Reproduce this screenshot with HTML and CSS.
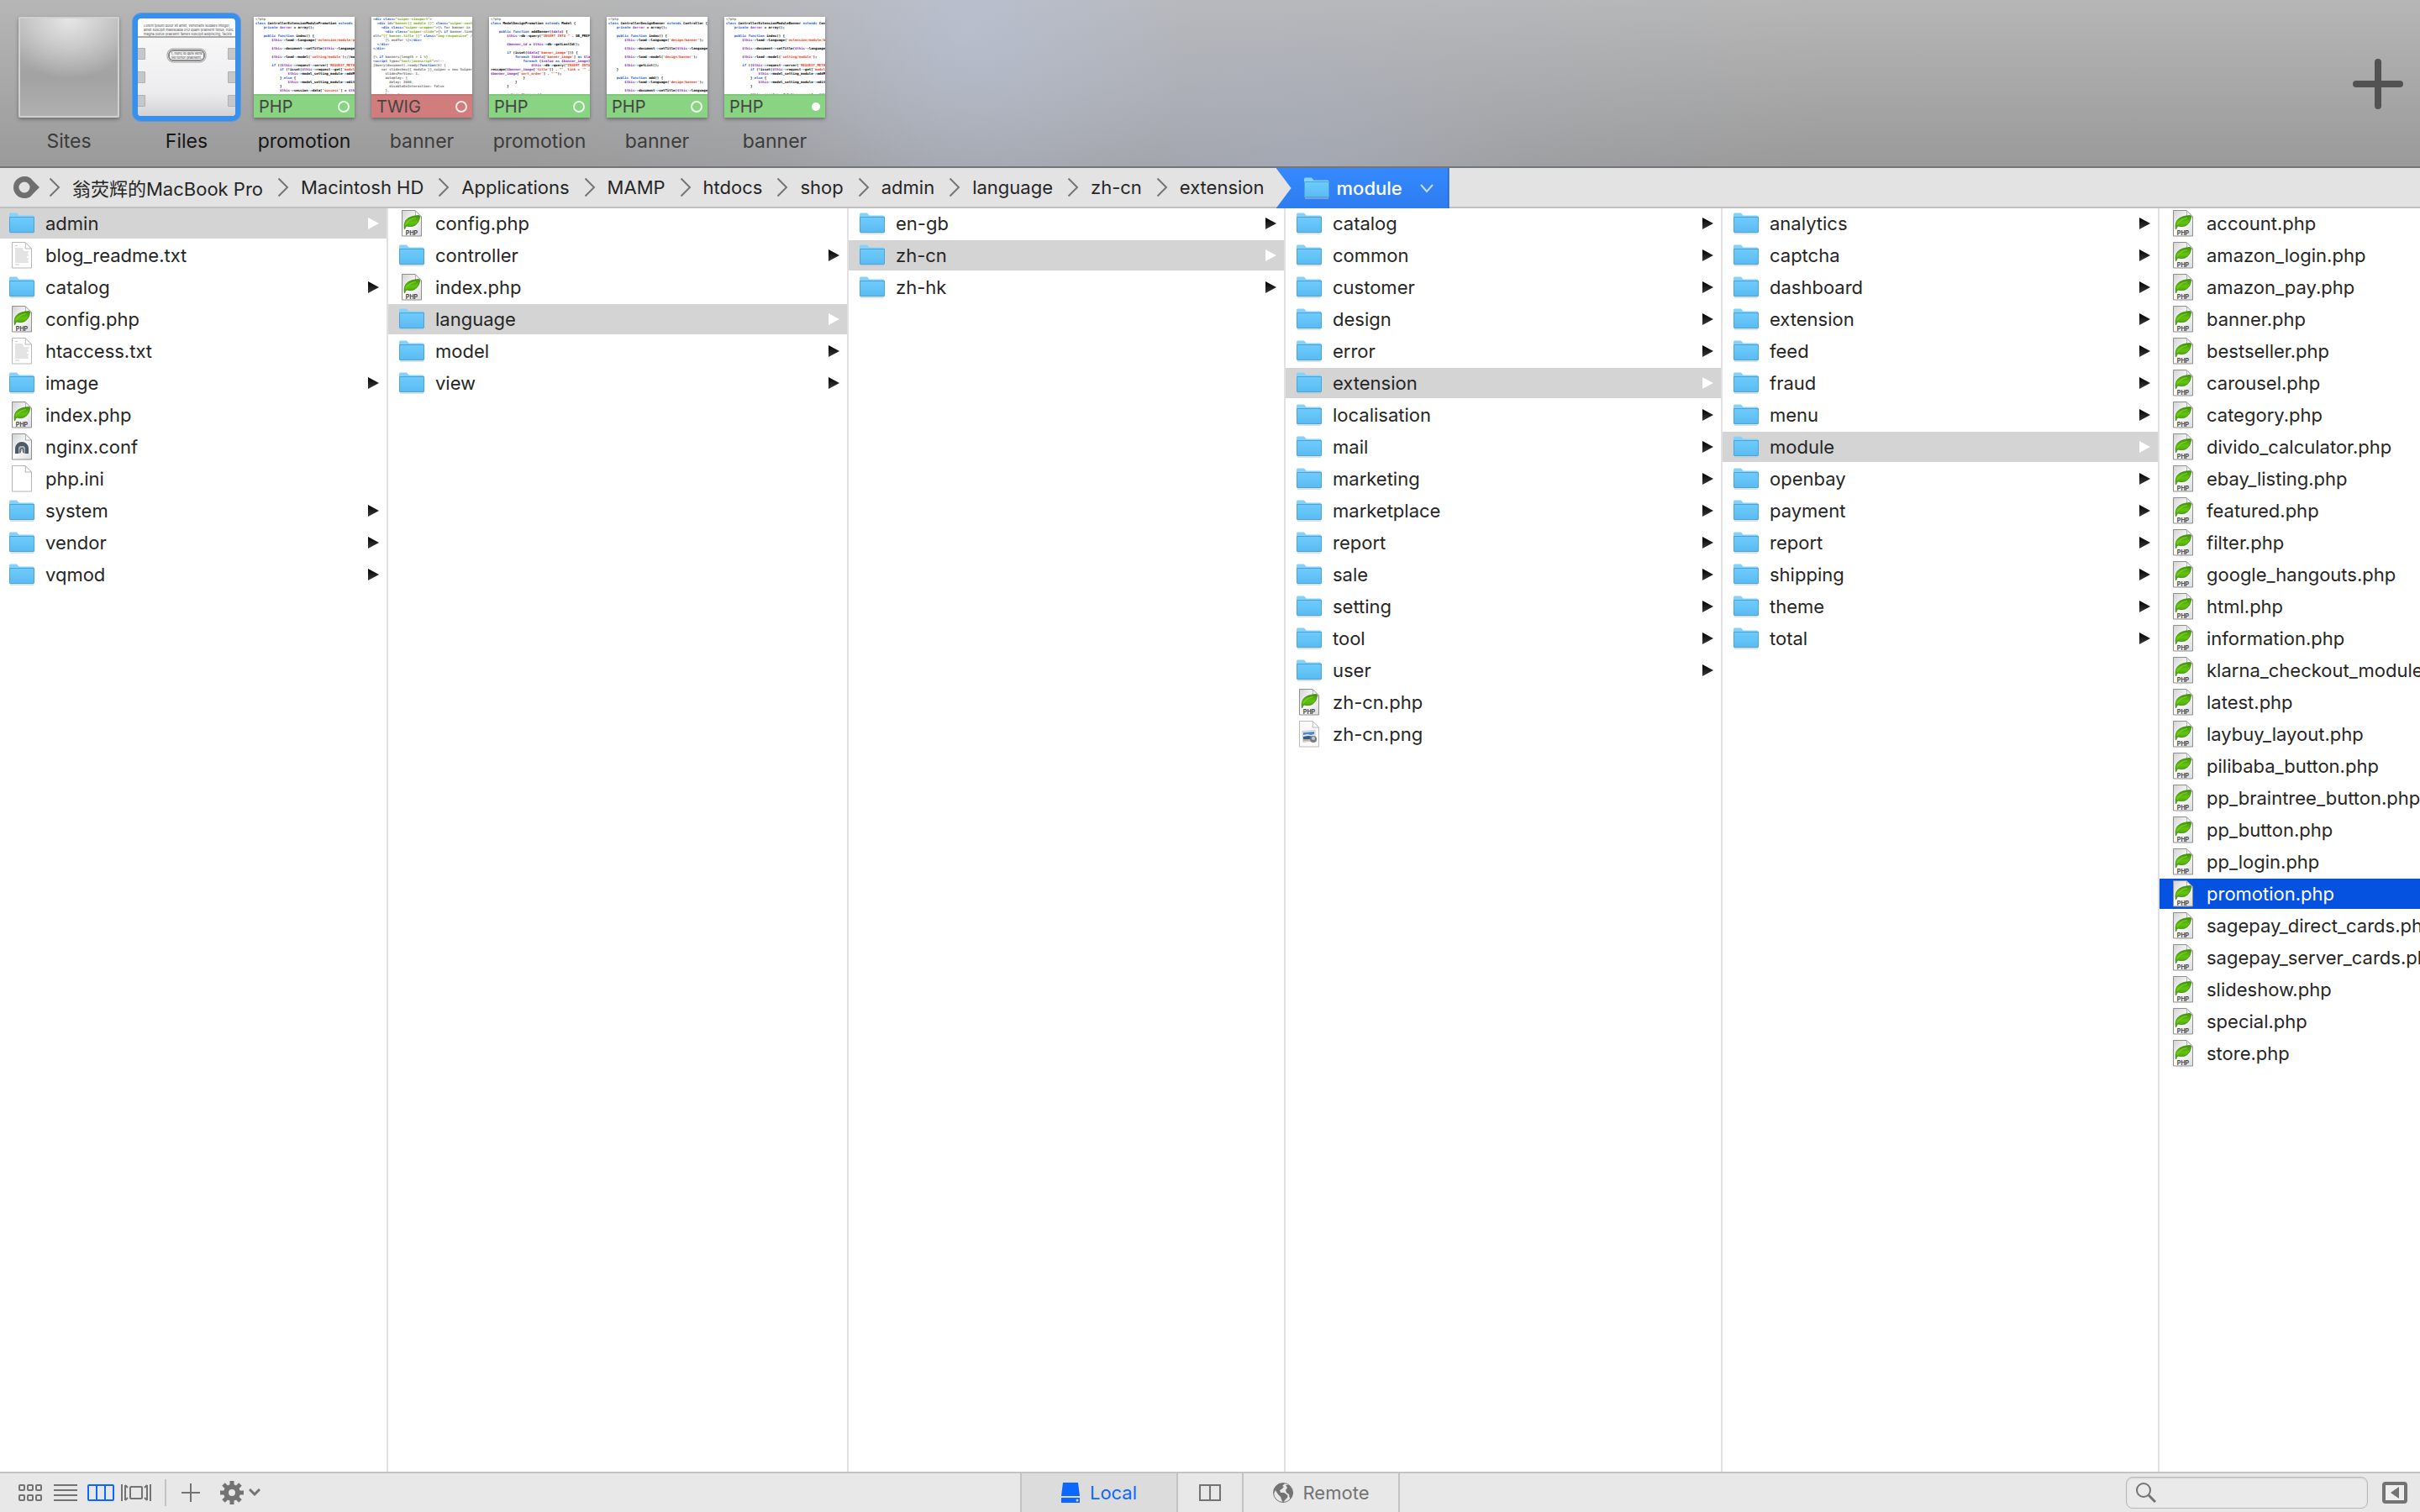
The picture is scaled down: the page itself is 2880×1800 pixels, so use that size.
FILE: index.html
```html
<!DOCTYPE html>
<html lang="zh-CN">

<head>
    <meta charset="utf-8">
    <title>module</title>
    <link rel="stylesheet" href="styles.css">
</head>

<body>

    <!-- shared icons -->
    <svg class="sprite" aria-hidden="true">
        <defs>
            <linearGradient id="folder-fill" x1="0" y1="0" x2="0" y2="1">
                <stop offset="0" stop-color="#6fcbfb" />
                <stop offset="1" stop-color="#59bbf3" />
            </linearGradient>
            <linearGradient id="page-fill" x1="0" y1="0" x2="1" y2="1">
                <stop offset="0" stop-color="#d2d2d2" />
                <stop offset="0.5" stop-color="#fbfbfb" />
                <stop offset="1" stop-color="#dcdcdc" />
            </linearGradient>
            <linearGradient id="leaf-fill" x1="0" y1="0" x2="0" y2="1">
                <stop offset="0" stop-color="#3d9408" />
                <stop offset="0.5" stop-color="#63c40f" />
                <stop offset="1" stop-color="#3f9a08" />
            </linearGradient>
            <linearGradient id="arrow-fill" x1="0" y1="0" x2="0" y2="1">
                <stop offset="0" stop-color="#000" />
                <stop offset="1" stop-color="#3c3c3c" />
            </linearGradient>
        </defs>
        <symbol id="folder" viewBox="0 0 30 26">
            <path d="M1 25h28" stroke="#b9c4cb" stroke-width="1" />
            <path d="M0 2q0-1.500 1.500-1.500h7.500l2.500 3H28q1.500 0 1.500 1.500V22H0z" fill="#84d1f9" />
            <path d="M0 5.500h30V22.500q0 1.500-1.500 1.500h-27Q0 24 0 22.500z" fill="url(#folder-fill)" />
            <path d="M0.500 5.500h29v17q0 1-1 1h-27q-1 0-1-1z" fill="none" stroke="#4aa4dc" />
        </symbol>
        <symbol id="php" viewBox="0 0 24 32">
            <path d="M.5.500H16L23.500 8v23H.5z" fill="url(#page-fill)" stroke="#8f8f8f" />
            <path d="M16 .5q1.500 4 0 7.500h7.500z" fill="#fff" stroke="#a8a8a8" />
            <path d="M3.500 23C2 14 5 7.500 20 6.500c1.500 0 1.800.5 1.500 2C20.500 17 14 21.500 6 19q-1.500 1-2.500 4z" fill="url(#leaf-fill)" stroke="#357f08" stroke-width=".7" />
            <path d="M5 17.500Q8 11 17 9.500" fill="none" stroke="#7fd01f" stroke-width="1.200" />
            <text x="12" y="30" class="php-mark">PHP</text>
        </symbol>
        <symbol id="txt" viewBox="0 0 24 32">
            <path d="M.5.500H16L23.500 8v23H.5z" fill="#fdfdfd" stroke="#b8b8b8" />
            <path d="M16 .5q1 4 0 7.500h7.500z" fill="#fff" stroke="#bbb" />
            <path d="M4 4.500h3M4 8h9M4 10h10M4 12h16M4 14h15M4 16h16M4 18h14M4 20h16M4 22h15M4 24h16M4 27h5" stroke="#cacaca" />
        </symbol>
        <symbol id="blank" viewBox="0 0 24 32">
            <path d="M.5.500H16L23.500 8v23H.5z" fill="#fff" stroke="#b4b4b4" />
            <path d="M16 .5q1 4 0 7.500h7.500z" fill="#fff" stroke="#b4b4b4" />
        </symbol>
        <symbol id="conf" viewBox="0 0 24 32">
            <path d="M.5.500H16L23.500 8v23H.5z" fill="url(#page-fill)" stroke="#8f8f8f" />
            <path d="M16 .5q1.500 4 0 7.500h7.500z" fill="#fff" stroke="#a8a8a8" />
            <path d="M4 24v-6a8 8 0 0 1 16 0v6h-4v-5a4 4 0 0 0-8 0v5z" fill="#4d5a68" />
            <path d="M8 24v-5a4 4 0 0 1 8 0v5h-2l-2-4-2 4z" fill="#a6aeb6" />
            <path d="M10 23v-3.500a2 2 0 0 1 4 0V23" fill="none" stroke="#38424d" />
        </symbol>
        <symbol id="png" viewBox="0 0 24 32">
            <path d="M.5.500H16L23.500 8v23H.5z" fill="#fafafa" stroke="#bbb" />
            <path d="M16 .5q1 4 0 7.500h7.500z" fill="#fff" stroke="#bbb" />
            <path d="M4 12.500l15-1v12l-14 2z" fill="#f4f4f4" stroke="#a8aaae" stroke-width=".6" />
            <path d="M5 14l13-1v5l-13 1z" fill="#4f87d4" />
            <path d="M5 17l5-1 4 1 4-1v2l-13 1z" fill="#dfe9f5" />
            <path d="M5 19l6-1 7 1v3H5z" fill="#345a8e" />
            <path d="M5 22h13v1L5 24.500z" fill="#c7a87a" />
            <circle cx="17" cy="22" r="4" fill="#777b80" />
            <circle cx="17" cy="21" r="2" fill="#c3c9d0" />
        </symbol>
        <symbol id="arrow" viewBox="0 0 13 14">
            <path d="M0 0l13 7-13 7z" />
        </symbol>
        <symbol id="crumb-arrow" viewBox="0 0 14 24">
            <path d="M1.500 1.500L12 12 1.500 22.500" fill="none" stroke="#757575" stroke-width="2" />
        </symbol>
    </svg>

    <header class="tabs">
        <ul class="tab-list">
            <li><a class="tab" href="#sites">
                <span class="thumb sites"></span>
                <span class="tab-name">Sites</span>
            </a></li>
            <li><a class="tab current" href="#files">
                <span class="thumb files">
                    <svg viewBox="0 0 116 116" width="116" height="116" aria-hidden="true">
                        <defs>
                            <linearGradient id="pane" x1="0" y1="0" x2="0" y2="1">
                                <stop offset="0" stop-color="#f7f7f8" />
                                <stop offset="0.7" stop-color="#ededef" />
                                <stop offset="1" stop-color="#d2d2d5" />
                            </linearGradient>
                        </defs>
                        <rect width="116" height="116" rx="4" fill="#fff" />
                        <path d="M0 22h116v90q0 4-4 4H4q-4 0-4-4z" fill="url(#pane)" />
                        <path d="M0 22h116" stroke="#a9a9ab" stroke-width="2" />
                        <g class="lorem">
                            <text x="7" y="10">Lorem ipsum dolor sit amet, venenatis sodales integer,</text>
                            <text x="7" y="15">amet suscipit malesuada orci quam praesent tellus, nunc</text>
                            <text x="7" y="20">magna purus praesent fames suscipit adipiscing, facilis</text>
                        </g>
                        <g fill="#c6c7ca" stroke="#b1b1b4">
                            <path d="M-1 35.500H8.500v13H-1zM-1 63.500H8.500v13H-1zM-1 91.500H8.500v13H-1z" />
                            <path d="M107.500 35.500H117v13h-9.500zM107.500 63.500H117v13h-9.500zM107.500 91.500H117v13h-9.500z" />
                        </g>
                        <rect x="35" y="36" width="46" height="16" rx="7" fill="#fff" stroke="#9c9c9e" />
                        <rect x="37" y="38" width="42" height="12" rx="5" fill="#f2f2f2" stroke="#8c8c8e" stroke-width="2" />
                        <g class="lorem">
                            <text x="40" y="43">t, nunc id quis vene</text>
                            <text x="40" y="48">vel tortor praesent.</text>
                        </g>
                    </svg>
                </span>
                <span class="tab-name">Files</span>
            </a></li>
            <li><a class="tab open" href="#promotion">
                <span class="thumb">
                    <code class="code">&lt;?php
class ControllerExtensionModulePromotion extends Controller {
    private $error = array();

    public function index() {
        $this->load->language('extension/module/promotion');

        $this->document->setTitle($this->language->get('title'));

        $this->load->model('setting/module');//model

        if (($this->request->server['REQUEST_METHOD'] == 'POST')) {
            if (!isset($this->request->get['module_id'])) {
                $this->model_setting_module->addModule();
            } else {
                $this->model_setting_module->editModule();
            }
            $this->session->data['success'] = $this->language;</code>
                    <span class="kind php"><span>PHP</span><i class="dot"></i></span>
                </span>
                <span class="tab-name">promotion</span>
            </a></li>
            <li><a class="tab" href="#banner-twig">
                <span class="thumb">
                    <code class="code twig">&lt;div class="swiper-viewport">
  &lt;div id="banner{{ module }}" class="swiper-container">
    &lt;div class="swiper-wrapper">{% for banner in banners %}
      &lt;div class="swiper-slide">{% if banner.link %}
alt="{{ banner.title }}" class="img-responsive" />
      {% endfor %}&lt;/div>
  &lt;/div>
&lt;/div>

{% if banners|length > 1 %}
&lt;script type="text/javascript">&lt;!--
jQuery(document).ready(function($) {
    var slideshow{{ module }}_swiper = new Swiper(
      slidesPerView: 1,
      autoplay: {
        delay: 3000,
        disableOnInteraction: false
      },
      loop: true</code>
                    <span class="kind twig-kind"><span>TWIG</span><i class="dot"></i></span>
                </span>
                <span class="tab-name">banner</span>
            </a></li>
            <li><a class="tab" href="#promotion-model">
                <span class="thumb">
                    <code class="code">&lt;?php
class ModelDesignPromotion extends Model {

    public function addBanner($data) {
        $this->db->query("INSERT INTO " . DB_PREFIX . "banner");

        $banner_id = $this->db->getLastId();

        if (isset($data['banner_image'])) {
            foreach ($data['banner_image'] as $language_id) {
                foreach ($value as $banner_image) {
                    $this->db->query("INSERT INTO " . DB_PREFIX);
>escape($banner_image['title']) . "', link = '" .
$banner_image['sort_order'] . "'");
                }
            }
        }

        return $banner_id;</code>
                    <span class="kind php"><span>PHP</span><i class="dot"></i></span>
                </span>
                <span class="tab-name">promotion</span>
            </a></li>
            <li><a class="tab" href="#banner-design">
                <span class="thumb">
                    <code class="code">&lt;?php
class ControllerDesignBanner extends Controller {
    private $error = array();

    public function index() {
        $this->load->language('design/banner');

        $this->document->setTitle($this->language->get('title'));

        $this->load->model('design/banner');

        $this->getList();
    }

    public function add() {
        $this->load->language('design/banner');

        $this->document->setTitle($this->language->get('title'));</code>
                    <span class="kind php"><span>PHP</span><i class="dot"></i></span>
                </span>
                <span class="tab-name">banner</span>
            </a></li>
            <li><a class="tab" href="#banner-module">
                <span class="thumb">
                    <code class="code">&lt;?php
class ControllerExtensionModuleBanner extends Controller {
    private $error = array();

    public function index() {
        $this->load->language('extension/module/banner');

        $this->document->setTitle($this->language->get('title'));

        $this->load->model('setting/module');

        if (($this->request->server['REQUEST_METHOD'] == 'POST')) {
            if (!isset($this->request->get['module_id'])) {
                $this->model_setting_module->addModule();
            } else {
                $this->model_setting_module->editModule();
            }

            $this->session->data['success'] = $this->language;</code>
                    <span class="kind php"><span>PHP</span><i class="dot full"></i></span>
                </span>
                <span class="tab-name">banner</span>
            </a></li>
        </ul>
        <button class="add-tab" type="button" aria-label="New tab">
            <svg viewBox="0 0 60 60" width="60" height="60"><path d="M4 30h52M30 4v52" stroke="#525252" stroke-width="8" stroke-linecap="round" /></svg>
        </button>
    </header>

    <nav class="path">
        <a class="home" href="#places" aria-label="Places">
            <svg viewBox="0 0 31 26" width="31" height="26"><path fill-rule="evenodd" fill="#6f6f6f" d="M13 0c5 0 8 2 10 5l8 8-8 8c-2 3-5 5-10 5A13 13 0 0 1 13 0zm0 6.500a6.500 6.500 0 1 0 0 13 6.500 6.500 0 0 0 0-13z" /></svg>
        </a>
        <ol class="crumbs"></ol>
        <button class="here" type="button">
            <svg class="folder-icon"><use href="#folder" /></svg>
            <span>module</span>
            <svg class="here-arrow" viewBox="0 0 16 11"><path d="M1 1l7 8 7-8" fill="none" stroke="#c4dcff" stroke-width="2" /></svg>
        </button>
    </nav>

    <main class="browser"></main>

    <footer class="status">
        <div class="tools">
            <button type="button" aria-label="Icons">
                <svg viewBox="0 0 28 20" width="28" height="20" fill="none" stroke="#737373" stroke-width="2"><rect x="1" y="1" width="6" height="6" rx="1" /><rect x="11" y="1" width="6" height="6" rx="1" /><rect x="21" y="1" width="6" height="6" rx="1" /><rect x="1" y="13" width="6" height="6" rx="1" /><rect x="11" y="13" width="6" height="6" rx="1" /><rect x="21" y="13" width="6" height="6" rx="1" /></svg>
            </button>
            <button class="list" type="button" aria-label="List">
                <svg viewBox="0 0 28 20" width="28" height="20" stroke="#737373" stroke-width="2"><path d="M0 1h28M0 7h28M0 13h28M0 19h28" /></svg>
            </button>
            <button type="button" aria-label="Columns">
                <svg viewBox="0 0 32 20" width="32" height="20" fill="none" stroke="#0c67ff" stroke-width="2"><rect x="1" y="1" width="30" height="18" rx="1" /><path d="M11 1v18M21 1v18" /></svg>
            </button>
            <button class="flow" type="button" aria-label="Cover flow">
                <svg viewBox="0 0 36 20" width="36" height="20" fill="none" stroke="#737373" stroke-width="2"><rect x="11" y="3" width="14" height="14" rx="1" /><path d="M1 0v20M35 0v20M5 1v18M31 1v18M5 1l3 3M5 19l3-3M31 1l-3 3M31 19l-3-3" /></svg>
            </button>
            <span class="divider"></span>
            <button class="plus" type="button" aria-label="New">
                <svg viewBox="0 0 22 22" width="22" height="22" stroke="#737373" stroke-width="2"><path d="M0 11h22M11 0v22" /></svg>
            </button>
            <button class="gear" type="button" aria-label="Actions">
                <svg viewBox="0 0 28 28" width="28" height="28" fill="none" stroke="#737373"><circle cx="14" cy="14" r="7" stroke-width="6" /><path d="M14 0v6M14 22v6M0 14h6M22 14h6M4 4l5 5M19 19l5 5M24 4l-5 5M9 19l-5 5" stroke-width="5" /></svg>
                <svg viewBox="0 0 14 10" width="14" height="10" fill="none" stroke="#737373" stroke-width="3"><path d="M1 1l6 6 6-6" /></svg>
            </button>
        </div>
        <div class="sides">
            <button class="side active" type="button">
                <svg viewBox="0 0 22 24" width="22" height="24"><path d="M2 0h18l2 16H0zM0 18h22v6H0z" fill="#0c67ff" /><circle cx="19" cy="21" r="1.500" fill="#dcdcdc" /></svg>
                <span>Local</span>
            </button>
            <button class="side split" type="button" aria-label="Split view">
                <svg viewBox="0 0 26 20" width="26" height="20" fill="none" stroke="#737373" stroke-width="2"><path d="M1 1h24v18H1zM13 1v18" /></svg>
            </button>
            <button class="side" type="button">
                <svg viewBox="0 0 24 24" width="24" height="24"><circle cx="12" cy="12" r="12" fill="#e8e8e8" /><circle cx="12" cy="12" r="11.500" fill="none" stroke="#737373" /><path d="M1 8q2-5 7-7l6 0-3 3 2 1-3 3-2 1 1 3 4 0 3 2q3 2 0 5l-2 2-2 3-2-4-1-3-3-3-2-3-1-2-2 4zM15 3l4 0q4 4 5 9l-2 6-2 1-1-5-3-2-1-3 2-3z" fill="#737373" /></svg>
                <span>Remote</span>
            </button>
        </div>
        <div class="find">
            <label class="search">
                <svg viewBox="0 0 24 24" width="24" height="24" fill="none" stroke="#737373"><circle cx="9" cy="9" r="8" stroke-width="2" /><path d="M15 15l8 8" stroke-width="3" /></svg>
                <input type="search" aria-label="Search">
            </label>
            <button type="button" aria-label="Show sidebar">
                <svg viewBox="0 0 30 26" width="30" height="26"><rect x="2" y="2" width="26" height="22" rx="2" fill="#eee" stroke="#737373" stroke-width="4" /><path d="M20 6v14l-10-7z" fill="#737373" /></svg>
            </button>
        </div>
    </footer>

    <script src="script.js"></script>
</body>

</html>
```
FILE: styles.css
```css
* {
    box-sizing: border-box;
}

body {
    margin: 0;
    height: 100vh;
    display: flex;
    flex-direction: column;
    overflow: hidden;
    background: white;
    color: #262626;
    font-family: Inter, "Noto Sans CJK SC", sans-serif;
    font-size: 22px;
}

ul,
ol {
    list-style-type: none;
    margin: 0;
    padding: 0;
}

a {
    color: inherit;
    text-decoration: none;
}

button {
    display: flex;
    align-items: center;
    padding: 0;
    border: 0;
    background: none;
    color: inherit;
    font: inherit;
}

svg {
    display: block;
    flex: none;
}

.sprite {
    position: absolute;
    width: 0;
    height: 0;
}

/* tabs */
.tabs {
    display: flex;
    justify-content: space-between;
    align-items: flex-start;
    height: 200px;
    padding: 20px 20px 18px 22px;
    border-bottom: 2px solid #757578;
    background:
        radial-gradient(ellipse 9% 140% at 40% 20%, rgba(188, 200, 228, 0.45), transparent),
        radial-gradient(ellipse 9% 90% at 54% 100%, rgba(170, 180, 205, 0.3), transparent),
        radial-gradient(ellipse 28% 200% at 48% 50%, rgba(185, 192, 210, 0.35), transparent),
        linear-gradient(#b6b6b6, #9a9a9a);
}

.tab-list {
    display: flex;
    gap: 20px;
}

.tab {
    display: flex;
    flex-direction: column;
    align-items: center;
    gap: 12px;
    width: 120px;
    color: #3c3c3c;
}

.tab-name {
    font-size: 23px;
    line-height: 32px;
}

.tab.current,
.tab.open {
    color: #161616;
}

.add-tab {
    align-self: center;
}

.thumb {
    display: flex;
    flex-direction: column;
    width: 120px;
    height: 120px;
    background: white;
    box-shadow: 0 2px 4px rgba(0, 0, 0, 0.35);
}

.thumb.sites {
    border: 2px solid #d0d0d0;
    border-radius: 2px;
    background:
        radial-gradient(ellipse 70% 62% at 50% 0, #e6e6e6, transparent),
        linear-gradient(#b4b4b4, #a2a2a2 60%, #b0b0b0);
}

.thumb.files {
    padding: 2px;
    border-radius: 6px;
    background: #3790ea;
    box-shadow: 0 0 0 4px #3790ea, 0 0 0 5px rgba(80, 150, 232, 0.8);
}

.lorem {
    font-size: 4px;
    fill: #444;
}

.php-mark {
    font-size: 7px;
    font-weight: 700;
    text-anchor: middle;
    fill: #444;
}

.code {
    flex: 1;
    overflow: hidden;
    padding: 0 2px;
    white-space: pre;
    color: #000;
    font-family: "DejaVu Sans Mono", monospace;
    font-size: 4px;
    font-weight: 700;
    line-height: 5px;
}

.code .keyword {
    color: #1f5fc4;
}

.code .variable {
    color: #8c2fb5;
}

.code .string {
    color: #e5401c;
}

.code .pointer {
    color: #1c7fe8;
}

.code .open-tag {
    color: #888;
}

.code.twig {
    color: #777;
}

.code.twig .string {
    color: #7fa818;
}

.kind {
    display: flex;
    justify-content: space-between;
    align-items: center;
    height: 28px;
    padding: 0 6px;
    border-top: 2px solid rgba(0, 0, 0, 0.06);
    color: #444;
    font-size: 20px;
}

.kind.php {
    background: #88d483;
}

.kind.twig-kind {
    background: #d27d7d;
}

.dot {
    width: 14px;
    height: 14px;
    border: 2px solid rgba(255, 255, 255, 0.85);
    border-radius: 50%;
}

.dot.full {
    width: 10px;
    height: 10px;
    background: white;
}

/* path bar */
.path {
    display: flex;
    align-items: center;
    height: 48px;
    padding-left: 16px;
    border-bottom: 2px solid #bfbfbf;
    background: #e3e3e3;
    white-space: nowrap;
}

.crumbs {
    display: flex;
    padding: 0 14px 0 11px;
}

.crumb {
    display: flex;
    align-items: center;
    gap: 14px;
}

.crumb + .crumb {
    margin-left: 17px;
}

.crumb svg {
    width: 14px;
    height: 24px;
}

.here {
    gap: 9px;
    height: 48px;
    margin-bottom: -2px;
    padding: 0 17px 0 33px;
    border-right: 2px solid #2667cc;
    background: linear-gradient(#3589ff, #2e7cf0);
    clip-path: polygon(0 0, 100% 0, 100% 100%, 0 100%, 18px 50%);
    color: white;
    font-weight: 500;
}

.folder-icon {
    width: 30px;
    height: 26px;
}

.here-arrow {
    width: 16px;
    height: 11px;
    margin-left: 12px;
}

/* columns */
.browser {
    flex: 1;
    display: grid;
    grid-template-columns: 462fr 548fr 520fr 520fr 520fr 310fr;
    min-height: 0;
}

.column {
    display: flex;
    flex-direction: column;
    gap: 2px;
    min-width: 0;
    overflow: hidden;
    border-right: 2px solid #e2e2e2;
}

.column:last-child {
    border-right: 0;
}

.item {
    display: flex;
    align-items: center;
    gap: 13px;
    height: 36px;
    padding: 0 9px 0 11px;
    white-space: nowrap;
}

.column + .column .item {
    padding-left: 13px;
}

.icon {
    width: 30px;
    height: 26px;
}

.icon.page {
    height: 32px;
}

.arrow {
    width: 13px;
    height: 14px;
    margin-left: auto;
    fill: url(#arrow-fill);
}

.item.on-path {
    background: #d4d4d4;
}

.item.on-path .arrow {
    fill: white;
}

.item.selected {
    background: #0552e0;
    color: white;
}

/* bottom bar */
.status {
    display: grid;
    grid-template-columns: 1fr auto 1fr;
    height: 48px;
    border-top: 2px solid #c3c3c3;
    background: #e8e8e8;
}

.tools {
    display: flex;
    align-items: center;
    gap: 12px;
    padding-left: 22px;
}

.list {
    margin-left: 2px;
}

.flow {
    margin-left: -4px;
}

.divider {
    width: 2px;
    height: 32px;
    margin-left: 4px;
    background: #c3c3c3;
}

.plus {
    margin: 0 12px 0 6px;
}

.gear {
    gap: 6px;
}

.sides {
    display: flex;
    border-left: 2px solid #c3c3c3;
}

.side {
    justify-content: center;
    gap: 12px;
    width: 186px;
    border-right: 2px solid #c3c3c3;
    color: #737373;
}

.side.split {
    width: 78px;
}

.side.active {
    background: #dcdcdc;
    color: #0c67ff;
}

.find {
    display: flex;
    justify-content: flex-end;
    align-items: center;
    gap: 17px;
    padding-right: 15px;
}

.search {
    display: flex;
    align-items: center;
    gap: 8px;
    width: 288px;
    height: 38px;
    padding: 0 11px;
    border: 1px solid #b8b8b8;
    border-radius: 8px;
    background: #eaeaea;
    box-shadow: inset 0 1px 2px rgba(0, 0, 0, 0.12);
}

.search input {
    flex: 1;
    min-width: 0;
    padding: 0;
    border: 0;
    outline: 0;
    background: none;
    font: inherit;
}
```
FILE: script.js
```js
let crumbs = document.querySelector('.crumbs');
let browser = document.querySelector('.browser');

const path = ['翁荧辉的MacBook Pro', 'Macintosh HD', 'Applications', 'MAMP', 'htdocs', 'shop', 'admin', 'language', 'zh-cn', 'extension'];

// names without an extension are folders, active is the folder or file that is open
const columns = [
    { active: 'admin', items: ['admin', 'blog_readme.txt', 'catalog', 'config.php', 'htaccess.txt', 'image', 'index.php', 'nginx.conf', 'php.ini', 'system', 'vendor', 'vqmod'] },
    { active: 'language', items: ['config.php', 'controller', 'index.php', 'language', 'model', 'view'] },
    { active: 'zh-cn', items: ['en-gb', 'zh-cn', 'zh-hk'] },
    { active: 'extension', items: ['catalog', 'common', 'customer', 'design', 'error', 'extension', 'localisation', 'mail', 'marketing', 'marketplace', 'report', 'sale', 'setting', 'tool', 'user', 'zh-cn.php', 'zh-cn.png'] },
    { active: 'module', items: ['analytics', 'captcha', 'dashboard', 'extension', 'feed', 'fraud', 'menu', 'module', 'openbay', 'payment', 'report', 'shipping', 'theme', 'total'] },
    { active: 'promotion.php', items: ['account.php', 'amazon_login.php', 'amazon_pay.php', 'banner.php', 'bestseller.php', 'carousel.php', 'category.php', 'divido_calculator.php', 'ebay_listing.php', 'featured.php', 'filter.php', 'google_hangouts.php', 'html.php', 'information.php', 'klarna_checkout_module.php', 'latest.php', 'laybuy_layout.php', 'pilibaba_button.php', 'pp_braintree_button.php', 'pp_button.php', 'pp_login.php', 'promotion.php', 'sagepay_direct_cards.php', 'sagepay_server_cards.php', 'slideshow.php', 'special.php', 'store.php'] }
];

const icons = { php: 'php', txt: 'txt', conf: 'conf', ini: 'blank', png: 'png' };

path.forEach(name => {
    crumbs.innerHTML += `<li class="crumb"><svg><use href="#crumb-arrow" /></svg><a href="#${name}">${name}</a></li>`;
});

columns.forEach(column => {
    const list = document.createElement('ul');
    list.className = 'column';
    column.items.forEach(name => {
        const type = name.split('.')[1];
        const icon = type ? icons[type] : 'folder';
        let state = '';
        if (name === column.active) {
            state = type ? ' selected' : ' on-path';
        }
        list.innerHTML += `<li><a class="item${state}" href="#${name}">
            <svg class="icon${type ? ' page' : ''}"><use href="#${icon}" /></svg>
            <span>${name}</span>
            ${type ? '' : '<svg class="arrow"><use href="#arrow" /></svg>'}
        </a></li>`;
    });
    browser.appendChild(list);
});

// colours for the code previews
const tokens = /('[^'\n]*'|"[^"\n]*")|(\$\w+)|(-&gt;)|(&lt;\?php)|(&lt;\/?\w+|\b(?:class|extends|private|public|function|if|else|foreach|as|return)\b)/g;
const names = ['string', 'variable', 'pointer', 'open-tag', 'keyword'];

document.querySelectorAll('.code').forEach(code => {
    code.innerHTML = code.innerHTML.replace(tokens, (text, ...groups) => {
        return `<span class="${names[groups.findIndex(g => g)]}">${text}</span>`;
    });
});
```
